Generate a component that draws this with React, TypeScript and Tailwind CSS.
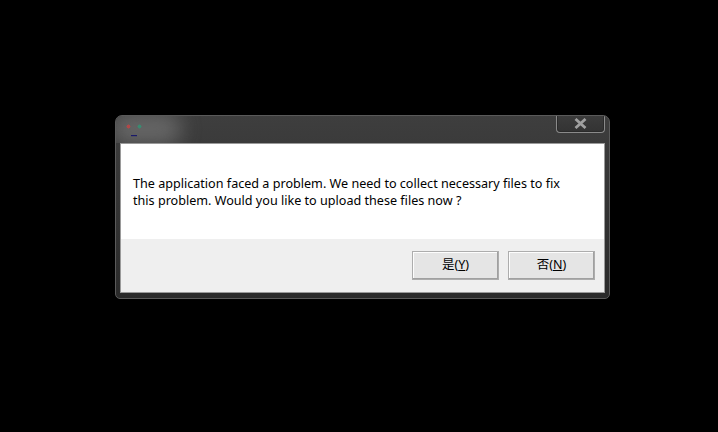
import React from "react";

export default function App() {
  return (
    <div className="w-[718px] h-[432px] bg-black pt-[115px] pl-[115px]" style={{ fontFamily: '"Noto Sans", "Noto Sans CJK SC", sans-serif' }}>
      <div className="relative w-[495px] h-[184px] rounded-t-[7px] rounded-b-[5px] border border-[#5a5a5a] bg-gradient-to-b from-[#3e3e3e] to-[#2a2a2a] flex flex-col px-[4px] pb-[5px] overflow-hidden">
        <div className="absolute left-[0px] top-[0px] w-[120px] h-[27px] overflow-hidden pointer-events-none">
          <div className="absolute left-[-6px] top-[-4px] w-[72px] h-[34px] rounded-full bg-[#777] opacity-70 blur-[10px]" />
        </div>
        <div className="relative h-[27px] flex items-start">
          <svg className="ml-[5px] mt-[7px]" width="20" height="15" viewBox="0 0 20 15">
            <path d="M2 2 L5 5 M5 2 L2 5 M3.5 1.5 L3.5 5.5 M1.5 3.5 L5.5 3.5" stroke="#b04848" strokeWidth="1" />
            <path d="M13 2 L16 5 M16 2 L13 5 M14.5 1.5 L14.5 5.5 M12.5 3.5 L16.5 3.5" stroke="#3a8a70" strokeWidth="1" />
            <rect x="6" y="12" width="6" height="1.2" fill="#1a1a6a" />
          </svg>
          <div className="absolute right-[0px] top-[-1px] w-[49px] h-[18px] rounded-b-[4px] border border-[#8a8a8a] border-t-0 bg-gradient-to-b from-[#3c3c3c] to-[#333] flex items-center justify-center shadow-[inset_0_0_0_1px_#2a2a2a]">
            <svg width="13" height="11" viewBox="0 0 13 11">
              <path d="M1.5 1 L11.5 10 M11.5 1 L1.5 10" stroke="#a0a0a0" strokeWidth="2.8" strokeLinecap="butt" />
            </svg>
          </div>
        </div>
        <div className="relative flex-1 border border-[#9a9a9a] flex flex-col">
          <div className="h-[95px] bg-white pl-[12px] pt-[31px] text-[12.6px] leading-[17px] text-black">
            <div>The application faced a problem. We need to collect necessary files to fix</div>
            <div>this problem. Would you like to upload these files now ?</div>
          </div>
          <div className="flex-1 bg-[#efefef] flex justify-end items-start pt-[12px] pr-[9px] gap-[9px]">
            <button className="w-[87px] h-[29px] bg-[#e5e5e5] border border-[#adadad] shadow-[inset_-1px_-1px_0_#a0a0a0,inset_1px_1px_0_#fdfdfd] text-[12.5px] text-black flex items-center justify-center">
              是(<span className="underline">Y</span>)
            </button>
            <button className="w-[87px] h-[29px] bg-[#e5e5e5] border border-[#adadad] shadow-[inset_-1px_-1px_0_#a0a0a0,inset_1px_1px_0_#fdfdfd] text-[12.5px] text-black flex items-center justify-center">
              否(<span className="underline">N</span>)
            </button>
          </div>
        </div>
      </div>
    </div>
  );
}
